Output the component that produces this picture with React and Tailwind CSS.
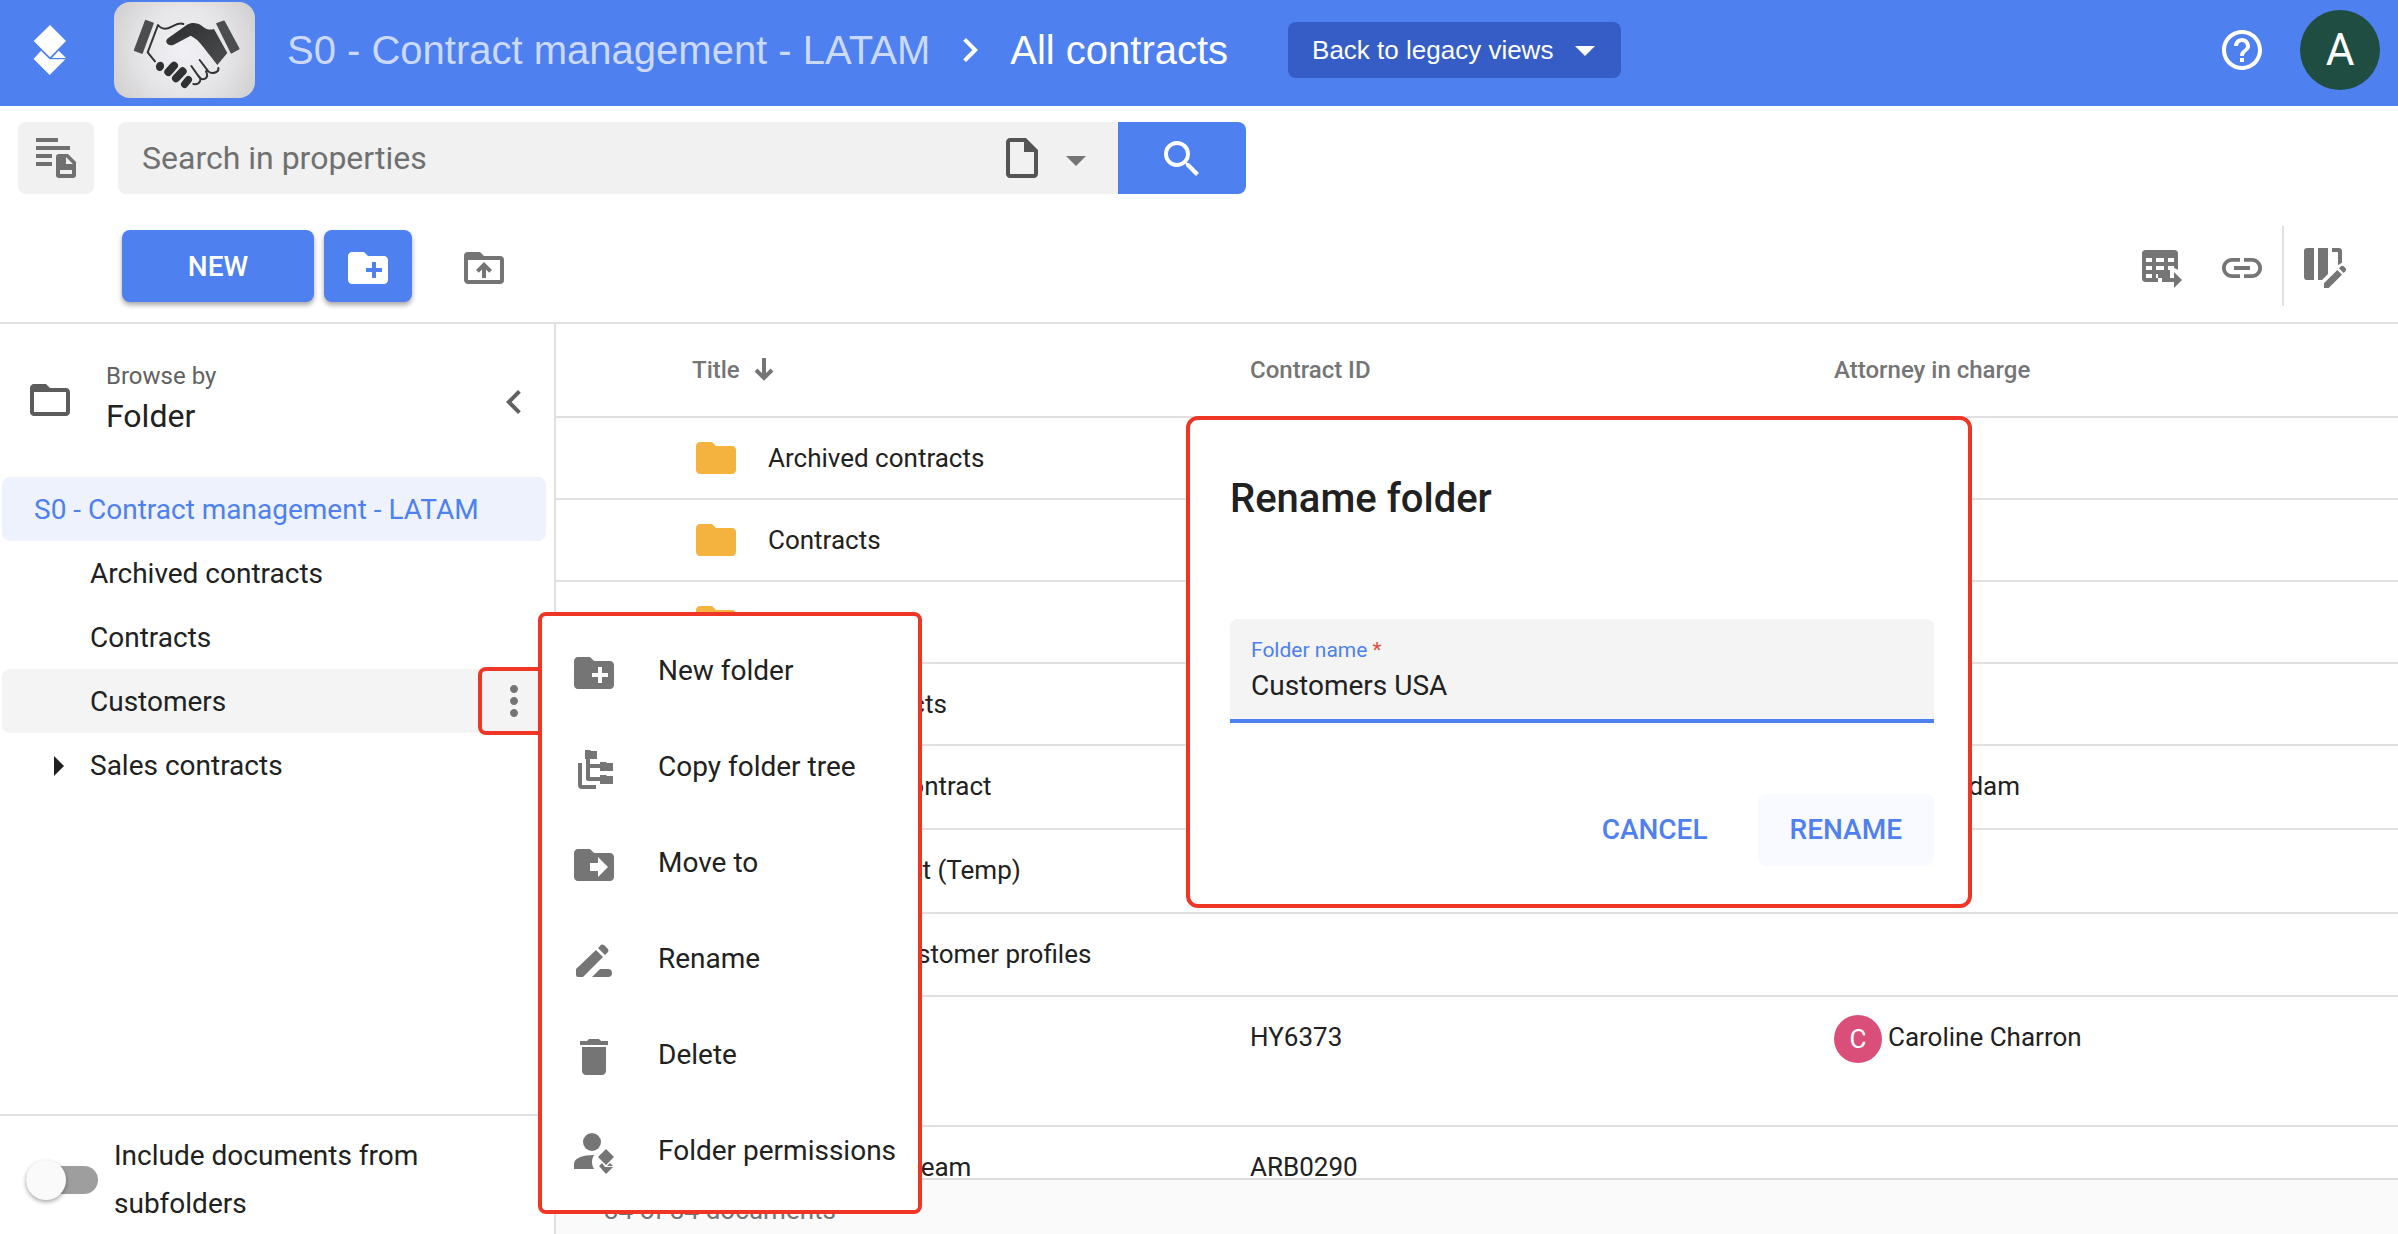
import { useState } from 'react'
import {
  MdArrowDropDown,
  MdArrowRight,
  MdChevronLeft,
  MdChevronRight,
  MdCreateNewFolder,
  MdDelete,
  MdDriveFileMove,
  MdFolder,
  MdFolderOpen,
  MdHelpOutline,
  MdLink,
  MdMoreVert,
  MdOutlineInsertDriveFile,
  MdSearch,
} from 'react-icons/md'

const folders = [
  { name: 'Archived contracts' },
  { name: 'Contracts' },
  { name: 'Customers', active: true },
  { name: 'Sales contracts', expandable: true },
]

const rows = [
  { title: 'Archived contracts', folder: true, height: 'h-[82px]' },
  { title: 'Contracts', folder: true, height: 'h-[82px]' },
  { title: 'Customers', folder: true, height: 'h-[82px]' },
  { title: 'Sales contracts', folder: true, height: 'h-[82px]' },
  { title: 'Distributor contract', attorney: 'Alice Adam', color: 'bg-[#4f80ef]', height: 'h-[84px]' },
  { title: 'Audit contract (Temp)', height: 'h-[84px]' },
  { title: 'Corporate customer profiles', height: 'h-[83px]' },
  { title: 'Lease', id: 'HY6373', attorney: 'Caroline Charron', color: 'bg-[#da4f79]', height: 'h-[130px]' },
  { title: 'Compliance team', id: 'ARB0290', height: 'h-[82px]' },
]

const menuItems = [
  { label: 'New folder', icon: MdCreateNewFolder },
  { label: 'Copy folder tree', icon: CopyTreeIcon },
  { label: 'Move to', icon: MdDriveFileMove },
  { label: 'Rename', icon: RenameIcon },
  { label: 'Delete', icon: MdDelete },
  { label: 'Folder permissions', icon: PermissionsIcon },
]

function Logo() {
  return (
    <svg className="w-[34px] h-[50px]" viewBox="38 75 102 150" fill="#fff">
      <path d="M89 75l48 48-48 49-49-49z" />
      <path d="M62 152l-22 25 48 48 47-47H88z" />
      <path d="M115 152l22 22H95z" />
    </svg>
  )
}

function Handshake() {
  return (
    <svg className="w-full h-full" viewBox="282 6 423 288" fill="none" strokeLinecap="round" strokeLinejoin="round">
      <defs>
        <linearGradient id="hand" x1="0" y1="0" x2="1" y2="1">
          <stop offset="0" stopColor="#2d2e30" />
          <stop offset="1" stopColor="#4a4c4e" />
        </linearGradient>
      </defs>
      <path d="M377 62l22 8-33 89-22-8z" fill="#4b4d4f" stroke="#4b4d4f" strokeWidth="5" />
      <path d="M591 71l21-7 44 82-22 12z" fill="#4b4d4f" stroke="#4b4d4f" strokeWidth="5" />
      <path d="M405 184l-22-27 31-82c8 10 18 14 32 9 18-7 30-18 44-12" stroke="#333436" strokeWidth="6" />
      <path d="M444 115l57-41c14-8 32-6 44 3 14 11 22 14 37 10l40 72-30 36-44-56c-10-14-20-24-36-32l-51 27c-16 7-30-9-17-19z" fill="url(#hand)" />
      <ellipse cx="420" cy="199" rx="12" ry="14" fill="#303133" transform="rotate(20 420 199)" />
      <path d="M445 216l17-19M468 235l20-21" stroke="#303133" strokeWidth="24" />
      <path d="M494 253l11-14" stroke="#303133" strokeWidth="22" />
      <path
        d="M539 180l26 34c8 8 20 4 24 2 6-3 7-8 6-12M514 198l24 34c6 8 16 6 20 2 6-6 3-14 0-20M520 252c10 2 17-2 20-8 3-6 1-10-2-14"
        stroke="#333436"
        strokeWidth="6"
      />
    </svg>
  )
}

function SearchListIcon() {
  return (
    <svg className="size-12" viewBox="0 0 48 48" fill="currentColor">
      <path d="M4 4h22v4H4zM4 12h34v4H4zM4 20h16v4H4zM4 28h16v4H4z" />
      <path
        fillRule="evenodd"
        d="M27 20h9l8 8v13a3 3 0 0 1-3 3H27a3 3 0 0 1-3-3V23a3 3 0 0 1 3-3zm7 3v7h7zm-6 13v4h12v-4z"
      />
    </svg>
  )
}

function UploadFolderIcon() {
  return (
    <svg className="size-12" viewBox="0 0 24 24" fill="currentColor">
      <path
        fillRule="evenodd"
        d="M20 6h-8l-2-2H4a2 2 0 0 0-2 2v12c0 1.100.9 2 2 2h16a2 2 0 0 0 2-2V8a2 2 0 0 0-2-2zm0 12H4V8h16z"
      />
      <path d="M11 17h2v-4.200l1.600 1.600L16 13l-4-4-4 4 1.400 1.400 1.600-1.600z" />
    </svg>
  )
}

function TableExportIcon() {
  return (
    <svg className="size-12" viewBox="264 732 144 144" fill="currentColor">
      <path
        fillRule="evenodd"
        d="M287 750h86q11 0 11 11v48l-18-8v9h-24-24v12h42v12h-36v12h-37q-11 0-11-11v-74q0-11 11-11zM288 774v12h18v-12zM318 774v12h24v-12zM354 774v12h18v-12zM288 798v12h18v-12zM318 798v12h24v-12zM288 822v12h18v-12z"
      />
      <path d="M318 810h42v12h-42z" />
      <path d="M354 798h18v12h-18z" fill="#fff" />
      <path d="M318 822h6v12h-6z" fill="#fff" />
      <path d="M336 834h36v-18l24 24-24 24v-18h-36z" />
    </svg>
  )
}

function EditColumnsIcon() {
  return (
    <svg className="size-12" viewBox="756 732 144 144" fill="currentColor">
      <path d="M772 744h20v96h-20q-10 0-10-10v-76q0-10 10-10zM804 744h30v78l-18 18h-12zM846 744h20q10 0 10 10v34l-12 8v-40h-18z" />
      <path d="M822 864v-14l40-40 14 14-40 40zM867 805l6-6q4-3 8 0l6 6q3 4 0 8l-6 6z" />
    </svg>
  )
}

function SortArrow() {
  return (
    <svg className="w-5 h-6" viewBox="0 0 20 24" fill="none" stroke="currentColor" strokeWidth="4">
      <path d="M10 0v20M2 12l8 8 8-8" />
    </svg>
  )
}

function CopyTreeIcon({ className }) {
  return (
    <svg className={className} viewBox="0 0 48 48" fill="currentColor">
      <path d="M8 18h4v22h14v4H12a4 4 0 0 1-4-4z" />
      <path d="M15 5h5l1 1h6v8h-7v5h10v-2h6l1 1h6v8H30v-3H20v9h10v-2h6l1 1h6v8H30v-3H18a2 2 0 0 1-2-2V14h-1z" />
    </svg>
  )
}

function RenameIcon({ className }) {
  return (
    <svg className={className} viewBox="0 0 48 48" fill="currentColor">
      <path d="M6 38v-6l20-19 7 7-20 20H8a2 2 0 0 1-2-2zM28 11l3-3q1-1 3 0l4 4q1 2 0 3l-3 3z" />
      <path d="M22 40l8-8h8a4 4 0 0 1 0 8z" />
    </svg>
  )
}

function PermissionsIcon({ className }) {
  return (
    <svg className={className} viewBox="0 0 48 48" fill="currentColor">
      <circle cx="22" cy="13" r="9" />
      <path d="M4 40v-5c0-6 9-9 20-9q-4 7 0 14z" />
      <path d="M36 20l8 8-8 8-8-8z" />
      <path d="M32 34l-3 3 7 8 7-7h-8zM40 34l3 3h-6z" />
    </svg>
  )
}

function Header() {
  return (
    <header className="h-[106px] shrink-0 bg-[#4f80ef] text-white flex items-center pb-1.5 pl-[33px] pr-[18px] font-['Liberation_Sans',sans-serif]">
      <a href="#" aria-label="Home">
        <Logo />
      </a>
      <div className="ml-[47px] w-[141px] h-24 rounded-2xl overflow-hidden bg-[radial-gradient(circle,#f1f0f4_0%,#e6e5e8_50%,#cfcdcd_100%)]">
        <Handshake />
      </div>
      <nav className="ml-8 flex items-center text-[40px] leading-[48px] whitespace-nowrap">
        <a href="#" className="text-[#cbd9fa]">S0 - Contract management - LATAM</a>
        <MdChevronRight className="mx-4 size-12" />
        <a href="#">All contracts</a>
      </nav>
      <button className="ml-15 h-14 pl-6 pr-3 flex items-center gap-2 rounded-lg bg-[#355dc5] text-[26px] whitespace-nowrap">
        Back to legacy views
        <MdArrowDropDown className="size-12" />
      </button>
      <button className="ml-auto" aria-label="Help">
        <MdHelpOutline className="size-12" />
      </button>
      <button className="ml-[34px] size-20 rounded-full bg-[#1f4d42] font-[Roboto,sans-serif] text-[44px]">A</button>
    </header>
  )
}

function SearchBar() {
  return (
    <form className="flex pt-4 pl-[18px]" onSubmit={(e) => e.preventDefault()}>
      <button type="button" aria-label="Search scope" className="w-[76px] h-[72px] flex items-center justify-center rounded-lg bg-[#f1f1f1] text-[#707070]">
        <SearchListIcon />
      </button>
      <div className="ml-6 w-[1000px] flex items-center rounded-l-lg bg-[#f1f1f1] pl-6 pr-[18px]">
        <input
          aria-label="Search in properties"
          placeholder="Search in properties"
          className="flex-1 min-w-0 bg-transparent text-[32px] placeholder-[#707070] outline-none"
        />
        <button type="button" aria-label="Document type" className="flex items-center gap-1.5">
          <MdOutlineInsertDriveFile className="size-12 text-[#545454]" />
          <MdArrowDropDown className="size-12 mt-1 text-[#757575]" />
        </button>
      </div>
      <button aria-label="Search" className="w-32 h-[72px] pt-0.5 flex items-center justify-center rounded-r-lg bg-[#4f80ef] text-white">
        <MdSearch className="size-12" />
      </button>
    </form>
  )
}

function Toolbar() {
  return (
    <div className="mt-8 h-[98px] flex items-start pl-[122px] pr-12 border-b-2 border-[#e0e0e0] text-[#757575]">
      <button className="mt-1 w-48 h-[72px] pt-0.5 rounded-lg bg-[#4f80ef] text-white text-[28px] font-medium shadow-[0_3px_5px_rgba(0,0,0,0.35)]">
        NEW
      </button>
      <button aria-label="New folder" className="mt-1 ml-2.5 w-[88px] h-[72px] pt-1 flex items-center justify-center rounded-lg bg-[#4f80ef] text-white shadow-[0_3px_5px_rgba(0,0,0,0.35)]">
        <MdCreateNewFolder className="size-12" />
      </button>
      <button aria-label="Upload folder" className="ml-12 mt-[18px]">
        <UploadFolderIcon />
      </button>
      <div className="ml-auto h-20 flex items-center">
        <button aria-label="Export table" className="mt-1">
          <TableExportIcon />
        </button>
        <button aria-label="Copy link" className="mt-1 ml-8">
          <MdLink className="size-12" />
        </button>
        <div className="ml-4 w-0.5 h-full bg-[#e0e0e0]" />
        <button aria-label="Edit columns" className="mt-1 ml-[18px]">
          <EditColumnsIcon />
        </button>
      </div>
    </div>
  )
}

function Sidebar() {
  return (
    <aside className="w-[556px] shrink-0 flex flex-col border-r-2 border-[#e0e0e0] text-[#212121] text-[28px]">
      <div className="flex items-center pt-9 pb-[37px] pl-[26px] pr-4">
        <MdFolderOpen className="size-12 text-[#5c5c5c]" />
        <div className="ml-8">
          <p className="text-2xl leading-8 text-[#616161]">Browse by</p>
          <p className="text-[32px] leading-12">Folder</p>
        </div>
        <button aria-label="Collapse" className="ml-auto pt-1 text-[#616161]">
          <MdChevronLeft className="size-12" />
        </button>
      </div>
      <div className="pl-0.5 pr-2">
        <a href="#" className="flex items-center h-16 pt-0.5 pl-8 rounded-lg bg-[#edf2fd] text-[#4f80ef]">
          S0 - Contract management - LATAM
        </a>
        {folders.map((f) => (
          <div key={f.name} className={`flex items-center h-16 pt-0.5 pl-8 rounded-lg ${f.active ? 'bg-[#f4f4f4]' : ''}`}>
            <span className="w-14 shrink-0">
              {f.expandable && <MdArrowRight className="size-12" />}
            </span>
            <a href="#">{f.name}</a>
            {f.active && (
              <button
                aria-label="More actions"
                className="ml-auto -mt-1.5 -mb-1 w-[68px] h-[68px] pl-1 flex items-center justify-center rounded-lg border-4 border-[#ee3526] text-[#757575]"
              >
                <MdMoreVert className="size-12" />
              </button>
            )}
          </div>
        ))}
      </div>
      <label className="mt-auto h-[120px] flex items-center gap-4 pl-[26px] pr-8 border-t-2 border-[#e0e0e0] leading-12">
        <input type="checkbox" role="switch" className="peer sr-only" />
        <span className="shrink-0 w-[72px] h-7 mt-2.5 flex items-center rounded-full bg-[#9e9e9e]">
          <span className="size-10 shrink-0 rounded-full bg-[#fafafa] shadow-[0_2px_4px_rgba(0,0,0,0.35)]" />
        </span>
        <span className="mt-2.5">Include documents from subfolders</span>
      </label>
    </aside>
  )
}

function ContractTable() {
  return (
    <div className="flex-1 min-w-0 flex flex-col">
      <div className="flex-1 min-h-0 overflow-hidden">
        <table className="w-full table-fixed text-left text-[26px] text-[#212121]">
          <colgroup>
            <col className="w-[694px]" />
            <col className="w-[584px]" />
            <col />
          </colgroup>
          <thead className="text-2xl text-[#757575]">
            <tr className="h-[93px] border-b-2 border-[#e0e0e0]">
              <th className="pl-34 font-medium">
                <span className="flex items-center gap-3.5">
                  Title
                  <SortArrow />
                </span>
              </th>
              <th className="font-medium">Contract ID</th>
              <th className="font-medium">Attorney in charge</th>
            </tr>
          </thead>
          <tbody>
            {rows.map((r) => (
              <tr key={r.title} className={`${r.height} border-b-2 border-[#e0e0e0] align-top`}>
                <td className="pt-4 pl-34">
                  <div className="flex items-center gap-7 h-12">
                    {r.folder ? <MdFolder className="size-12 text-[#f3b33e]" /> : <MdOutlineInsertDriveFile className="size-12 text-[#757575]" />}
                    {r.title}
                  </div>
                </td>
                <td className="pt-4 leading-12">{r.id}</td>
                <td className="pt-4">
                  {r.attorney && (
                    <div className="flex items-center gap-1.5 h-12">
                      <span className={`mt-1 size-12 rounded-full flex items-center justify-center text-white ${r.color}`}>
                        {r.attorney[0]}
                      </span>
                      {r.attorney}
                    </div>
                  )}
                </td>
              </tr>
            ))}
          </tbody>
        </table>
      </div>
      <footer className="h-14 shrink-0 pl-12 pt-1.5 border-t-2 border-[#dcdcdc] bg-[#fafafa] text-[26px] leading-12 text-[#757575]">
        34 of 34 documents
      </footer>
    </div>
  )
}

function FolderMenu() {
  return (
    <ul className="absolute left-[538px] top-[612px] w-96 pt-[7px] pb-[11px] rounded-lg border-4 border-[#ee3526] bg-white text-[28px] text-[#212121]">
      {menuItems.map(({ label, icon: Icon }) => (
        <li key={label}>
          <button className="w-full h-24 pl-7 flex items-center gap-10 whitespace-nowrap">
            <Icon className="size-12 mt-1 text-[#757575]" />
            {label}
          </button>
        </li>
      ))}
    </ul>
  )
}

function RenameDialog() {
  const [name, setName] = useState('Customers USA')

  return (
    <div role="dialog" aria-labelledby="rename-title" className="absolute left-[1186px] top-[416px] w-[786px] pl-10 pr-[34px] pt-[55px] pb-[38px] rounded-xl border-4 border-[#ee3526] bg-white text-[#212121]">
      <h2 id="rename-title" className="text-[40px] leading-12 font-medium">Rename folder</h2>
      <div className="mt-24 h-[104px] px-[21px] pt-[15px] flex flex-col rounded-t-lg border-b-4 border-[#4f80ef] bg-[#f4f4f4]">
        <label htmlFor="folder-name" className="text-[21px] leading-8 text-[#4f80ef]">
          Folder name <span className="text-[#e04f3c]">*</span>
        </label>
        <input
          id="folder-name"
          value={name}
          onChange={(e) => setName(e.target.value)}
          className="bg-transparent text-[28px] leading-10 outline-none"
        />
      </div>
      <div className="mt-[71px] flex justify-end gap-[18px] text-[28px] font-medium text-[#4f80ef]">
        <button className="h-[72px] px-8 rounded-lg">CANCEL</button>
        <button className="h-[72px] px-8 rounded-lg bg-[#f8faff]">RENAME</button>
      </div>
    </div>
  )
}

export default function App() {
  return (
    <div className="relative h-screen flex flex-col overflow-hidden bg-white font-[Roboto,sans-serif]">
      <Header />
      <SearchBar />
      <Toolbar />
      <div className="flex-1 min-h-0 flex">
        <Sidebar />
        <ContractTable />
      </div>
      <FolderMenu />
      <RenameDialog />
    </div>
  )
}
